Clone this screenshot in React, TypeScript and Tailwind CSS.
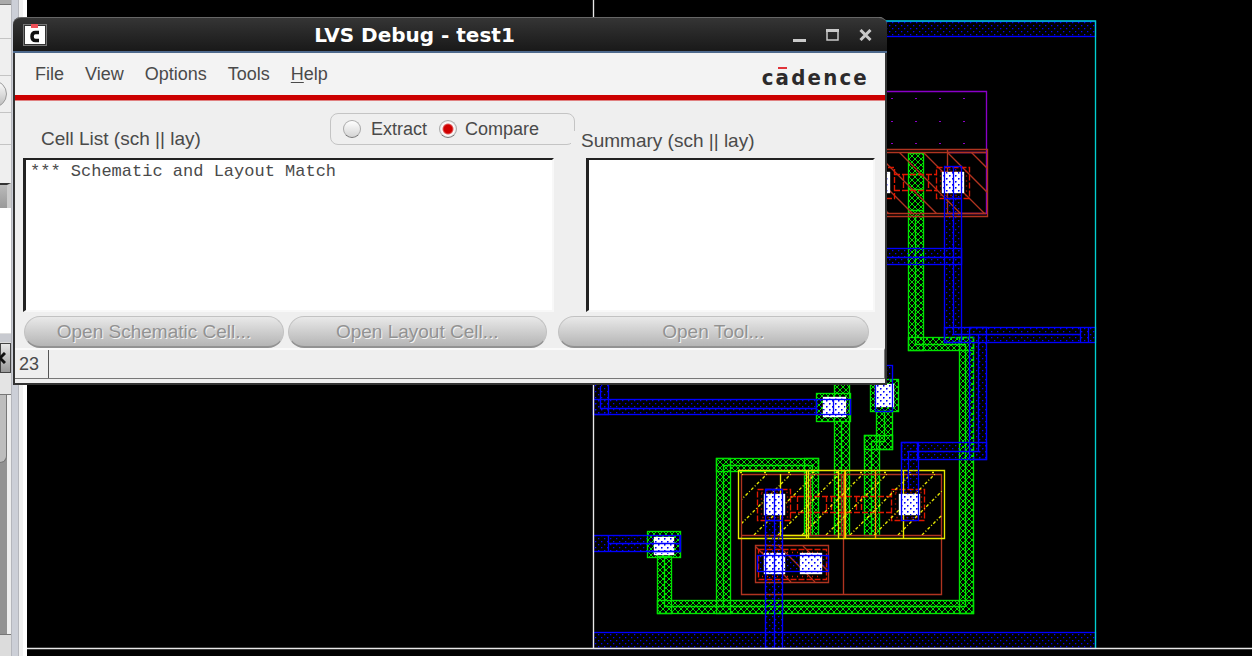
import React, { useState } from "react";

type Box = [number, number, number, number];

const greenBoxes: Box[] = [
  [908, 153, 15, 197],
  [908, 337, 65, 13],
  [959, 337, 14, 276],
  [657, 600, 316, 13],
  [657, 556, 14, 57],
  [716, 458, 14, 155],
  [716, 458, 102, 13],
  [804, 458, 14, 77],
  [834, 380, 15, 155],
  [876, 411, 16, 38],
  [864, 435, 28, 14],
  [864, 435, 15, 100],
  [647, 531, 33, 26],
  [816, 393, 34, 28],
  [870, 379, 28, 32],
];

const greenLines =
  "M915.5 215V344.5H965.5V606M664.5 557V606.5H965M723.5 606V465.5H812.5V535M841.5 421V535M884.5 411V441.5H871.5V535M908 174.5H923M908 189.5H923M908 210.5H923";

const blueBoxes: Box[] = [
  [880, 21, 215, 15],
  [593, 632, 502, 16],
  [593, 380, 15, 34],
  [593, 399, 257, 15],
  [593, 535, 87, 16],
  [880, 248, 81, 16],
  [944, 166, 17, 176],
  [944, 327, 151, 15],
  [969, 327, 17, 132],
  [901, 442, 85, 17],
  [901, 442, 17, 78],
  [765, 489, 17, 159],
  [757, 555, 71, 16],
  [875, 365, 17, 46],
];

const blueLines =
  "M600.5 386V408.5H816M816.5 399V415M608.5 535V551M608 543.5H680M886 257.5H961M953.5 166V334.5H1080.5M1080.5 327V342M1088.5 327V342M978.5 334V451.5H908.5V489M774.5 489V648M765 520.5H782M944 198.5H961M765 489.5H782M917.5 442V459M647.5 551.5H680V535M833.5 399V415";

const vias: Box[] = [
  [942, 172, 21, 20],
  [880, 172, 9, 20],
  [823, 397, 22, 19],
  [875, 384, 18, 22],
  [899, 494, 20, 20],
  [764, 494, 20, 20],
  [764, 553, 20, 20],
  [800, 553, 21, 20],
  [654, 537, 19, 17],
];

const purpleDots = [891, 915, 939, 963].flatMap((x) => [98, 121, 143].map((y) => [x, y]));

function Boxes({ boxes, fill, stroke }: { boxes: Box[]; fill: string; stroke: string }) {
  return (
    <g>
      {boxes.map(([x, y, w, h], i) => (
        <rect key={i} x={x + 0.5} y={y + 0.5} width={w} height={h} fill={fill} stroke={stroke} />
      ))}
    </g>
  );
}

function LayoutCanvas() {
  return (
    <svg
      className="block h-full w-full"
      viewBox="27 0 1225 656"
      preserveAspectRatio="xMinYMin slice"
      strokeWidth="1.35"
      fill="none"
      aria-label="Layout view"
    >
      <defs>
        <pattern id="metal" width="6" height="6" patternUnits="userSpaceOnUse">
          <path d="M1 1h1.300v1.300h-1.300zM4 4h1.300v1.300h-1.300z" fill="#0000ff" />
        </pattern>
        <pattern id="poly" width="6" height="6" patternUnits="userSpaceOnUse">
          <path
            d="M0 0h1v1h-1zM1 1h1v1h-1zM2 2h2v1h-2zM4 1h1v1h-1zM5 0h1v1h-1zM1 4h1v1h-1zM0 5h1v1h-1zM2 3h2v1h-2zM4 4h1v1h-1zM5 5h1v1h-1z"
            fill="#00dd00"
          />
        </pattern>
        <pattern id="via" width="6" height="6" patternUnits="userSpaceOnUse">
          <rect width="6" height="6" fill="#fff" />
          <path d="M1 1h1.400v1.400h-1.400zM4 4h1.400v1.400h-1.400z" fill="#0000ff" />
        </pattern>
        <clipPath id="nwell">
          <rect x="880" y="152" width="107" height="62" />
        </clipPath>
        <clipPath id="diff">
          <rect x="742" y="474" width="200" height="61" />
        </clipPath>
        <clipPath id="tap">
          <rect x="755" y="546" width="74" height="36" />
        </clipPath>
      </defs>

      <path d="M880 91.5H986.5V213.5H947M947 152.5H986" stroke="#8a00c8" />
      {purpleDots.map(([x, y]) => (
        <rect key={`${x}-${y}`} x={x} y={y} width="2" height="1" fill="#8a00c8" />
      ))}

      <Boxes boxes={greenBoxes} fill="url(#poly)" stroke="#00e400" />
      <path d={greenLines} stroke="#00e400" />

      <g stroke="#b03420">
        <path d="M880 149.5H987.5V216.5H880M880 152.5H986M880 213.5H986M947.5 149V214" />
        <path
          clipPath="url(#nwell)"
          d="M827 152l62 62M851 152l62 62M875 152l62 62M899 152l62 62M923 152l62 62M947 152l62 62M971 152l62 62"
        />
        <path d="M741.5 474.5H941.5V594.5H741.5ZM843.5 474V594M741 535.5H941M755.5 545.5H828.5V582.5H755.5ZM810.5 474V535M841.5 474V535" />
        <path clipPath="url(#tap)" d="M755 546l36 36M779 546l36 36M803 546l36 36" />
      </g>

      <g stroke="#e01800" strokeDasharray="6 2">
        <path d="M936.5 167.5H969.5V198.5H936.5ZM880 167.5H894.5V198.5H880M894 174.5H936M894 190.5H936M903.5 174V190M928.5 174V190" />
        <path d="M757.5 489.5H790.5V520.5H757.5ZM891.5 489.5H924.5V520.5H891.5ZM790 496.5H891M790 512.5H891M826.5 496V512M831.5 496V512M856.5 496V512M861.5 496V512M797.5 496V512M758.5 549.5H826.5V579.5H758.5Z" />
        <path
          d="M761.5 492.5H787.5V517.5H761.5ZM895.5 492.5H921.5V517.5H895.5ZM940.5 171.5H966.5V195.5H940.5ZM762 576.5H822M762 552.5H822"
          strokeDasharray="1 4"
        />
      </g>

      <g stroke="#eaea00">
        <path d="M738.5 470.5H944.5V538.5H738.5ZM780.5 474V535.5H808M806.5 471V538M808.5 471V538M838.5 471V538M845.5 471V538M903.5 471V538" />
        <path d="M875.5 471V538M844.5 471V538" stroke="#ff9800" />
        <path
          clipPath="url(#diff)"
          strokeDasharray="3 2 1 2"
          d="M706 535l62-62M730 535l62-62M754 535l62-62M778 535l62-62M802 535l62-62M826 535l62-62M850 535l62-62M874 535l62-62M898 535l62-62M922 535l62-62M682 535l62-62"
        />
        <path d="M740 472.5H944" strokeDasharray="2 22" />
      </g>

      <Boxes boxes={vias} fill="url(#via)" stroke="#fff" />
      <Boxes boxes={blueBoxes} fill="url(#metal)" stroke="#0000ff" />
      <path d={blueLines} stroke="#0000ff" />

      <path d="M880 21H1095.5V648" stroke="#00d0d0" />
      <path d="M593.5 0V648M27 648.5H1252" stroke="#e8e8e8" />
    </svg>
  );
}

function SidePanel() {
  return (
    <div className="flex h-full w-[27px] shrink-0 overflow-hidden">
      <div className="flex w-[11px] flex-col overflow-hidden bg-[#efefef]">
        <div className="h-[5px] border-b border-[#777] bg-[#aaa]" />
        <div className="h-[34px] border-b border-[#c4c4c4]" />
        <div className="h-[37px] border-b border-[#c4c4c4]" />
        <div className="flex h-[37px] items-center justify-end border-b border-[#c4c4c4] pr-1">
          <div className="size-7 shrink-0 rounded-full border border-[#999] bg-linear-to-b from-white to-[#bbb]" />
        </div>
        <div className="h-8 border-b border-[#c4c4c4]" />
        <div className="h-[38px]" />
        <div className="h-[25px] border-t-2 border-r-4 border-t-[#333] border-r-[#ccc] bg-linear-to-b from-[#bbb] to-[#999]" />
        <div className="h-[125px] bg-white" />
        <div className="h-[10px] border-y border-[#ddd] bg-[#c8cad0]" />
        <div className="flex h-[30px] items-center justify-end border border-[#444] bg-linear-to-b from-[#e8e8e8] to-[#999] pr-1">
          <svg className="h-3 w-3 shrink-0" viewBox="0 0 12 12" stroke="#111" strokeWidth="3">
            <path d="M1 1l10 10M11 1L1 11" />
          </svg>
        </div>
        <div className="h-[22px] border-b border-[#777] bg-[#e4e4e4]" />
        <div className="flex-1 border-r-4 border-[#eee] bg-[#929292]">
          <div className="h-[68px] rounded-br-lg border-r border-b border-[#777] bg-[#bdbdbd]" />
        </div>
        <div className="h-[22px] border-t border-[#777] bg-[#dcdcdc]" />
      </div>
      <div className="w-[8px] border-x border-[#b4b6bc] bg-[#cccfd7]" />
      <div className="w-[8px] border-l-4 border-[#f0f0f0] bg-white" />
    </div>
  );
}

function CadenceMark() {
  return (
    <svg className="h-[22px] w-6" viewBox="0 0 24 22" aria-hidden="true">
      <rect x="0.5" y="0.5" width="23" height="21" fill="#333" stroke="#777" />
      <rect x="2" y="2" width="20" height="18" fill="#fff" />
      <rect x="8" y="0" width="7" height="4" fill="#f0525a" />
      <path
        d="M16 8.500H12.500Q9 8.500 9 12.500T12.500 16.500H16"
        fill="none"
        stroke="#111"
        strokeWidth="3.500"
      />
    </svg>
  );
}

const toolButton =
  "h-8 min-w-0 rounded-full border border-[#c2c2c2] border-b-2 border-b-[#929292] bg-linear-to-b from-[#e9e9e9] to-[#b5b5b5] text-[19px] text-[#929292] [text-shadow:1px_1px_0_#f4f4f4]";
const listBox =
  "h-[154px] resize-none border-t-2 border-l-3 border-r-2 border-b-2 border-t-[#222] border-l-[#222] border-r-[#f8f8f8] border-b-[#f8f8f8] bg-white outline-none";
const radio =
  "size-[18px] appearance-none rounded-full border border-[#aaa] border-b-[#777] bg-linear-to-b from-white to-[#d4d4d4] checked:bg-[radial-gradient(circle_at_center,#d00000_0_4px,#e06060_5px,#ffffff_6px,#d8d8d8_9px)]";

function LvsDebugWindow() {
  const [mode, setMode] = useState("compare");
  return (
    <section className="absolute top-[17px] right-[365px] left-[13px] rounded-t-lg border-x-2 border-b-2 border-[#333] bg-[#efefef] font-['Liberation_Sans',Arial,sans-serif] text-[18px] leading-6 text-[#4a4a4a]">
      <header className="-mx-0.5 flex h-9 items-center rounded-t-lg border-t border-b-2 border-t-[#666] border-b-[#4d698c] bg-linear-to-b from-[#353535] to-[#191919] px-2.5">
        <CadenceMark />
        <h1 className="flex-1 pr-2.5 text-center font-['DejaVu_Sans',sans-serif] text-[20px] font-bold text-white">
          LVS Debug - test1
        </h1>
        <div className="flex items-center gap-[18px] pr-1">
          <button type="button" aria-label="Minimize" className="flex h-4 w-[15px] items-end justify-center">
            <svg width="13" height="14" viewBox="0 0 13 14">
              <path d="M0 11.500h13" stroke="#c9c9c9" strokeWidth="3" />
            </svg>
          </button>
          <button type="button" aria-label="Maximize" className="flex h-4 w-[15px] items-center justify-center">
            <svg width="13" height="12" viewBox="0 0 13 12" fill="none" stroke="#c9c9c9">
              <path d="M1 1V11H12V1" strokeWidth="1.500" />
              <path d="M0 1.500h13" strokeWidth="3" />
            </svg>
          </button>
          <button type="button" aria-label="Close" className="flex h-4 w-[15px] items-center justify-center">
            <svg width="13" height="12" viewBox="0 0 13 12" stroke="#c9c9c9" strokeWidth="3">
              <path d="M1.500 1l10 10M11.500 1l-10 10" />
            </svg>
          </button>
        </div>
      </header>

      <div className="flex h-[42px] items-center justify-between bg-[#f3f3f3] pr-4 pl-5">
        <nav className="flex gap-[21px]">
          <button type="button">File</button>
          <button type="button">View</button>
          <button type="button">Options</button>
          <button type="button">Tools</button>
          <button type="button">
            <span className="underline underline-offset-2">H</span>elp
          </button>
        </nav>
        <div className="pt-2 font-['DejaVu_Sans_Condensed','DejaVu_Sans',sans-serif] text-[22px] font-bold tracking-widest text-[#2c2a2b]">
          c
          <span className="relative">
            a<span className="absolute top-0.5 left-0.5 h-0.5 w-[9px] bg-[#e0333a]" />
          </span>
          dence
        </div>
      </div>
      <div className="h-1.5 border-b border-[#e08080] bg-[#cc0000]" />

      <div className="flex h-[57px] pt-3">
        <div className="flex w-0 flex-[560] justify-between">
          <label htmlFor="cells" className="ml-[26px] pt-3.5 text-[19px]">
            Cell List (sch || lay)
          </label>
          <fieldset className="flex h-8 w-[245px] items-center rounded-lg border border-[#c4c4c4] pl-3">
            <input
              id="extract"
              type="radio"
              name="mode"
              className={radio}
              checked={mode === "extract"}
              onChange={() => setMode("extract")}
            />
            <label htmlFor="extract" className="pr-3 pl-2.5">
              Extract
            </label>
            <input
              id="compare"
              type="radio"
              name="mode"
              className={radio}
              checked={mode === "compare"}
              onChange={() => setMode("compare")}
            />
            <label htmlFor="compare" className="pl-2">
              Compare
            </label>
          </fieldset>
        </div>
        <div className="z-10 w-0 flex-[310] pt-4">
          <label htmlFor="summary" className="-ml-1 inline-block bg-[#efefef] pl-2.5 text-[19px] leading-5">
            Summary (sch || lay)
          </label>
        </div>
      </div>

      <div className="flex gap-8 pr-2.5 pl-2">
        <textarea
          id="cells"
          readOnly
          className={`${listBox} w-0 flex-[530] px-1 font-['Liberation_Mono','Courier_New',monospace] text-[17px] leading-6`}
          value="*** Schematic and Layout Match"
        />
        <textarea id="summary" readOnly className={`${listBox} w-0 flex-[290]`} value="" />
      </div>

      <div className="flex pt-1 pr-4 pl-[9px]">
        <button type="button" disabled className={`${toolButton} mr-1 flex-[260]`}>
          Open Schematic Cell...
        </button>
        <button type="button" disabled className={`${toolButton} mr-[11px] flex-[259]`}>
          Open Layout Cell...
        </button>
        <button type="button" disabled className={`${toolButton} flex-[312]`}>
          Open Tool...
        </button>
      </div>

      <footer className="mb-1 flex h-[31px] items-stretch border-t-2 border-r border-b border-t-[#fafafa] border-r-[#777] border-b-[#777]">
        <span className="flex items-center border-r border-[#555] pr-[9px] pl-1">23</span>
      </footer>
    </section>
  );
}

export default function App() {
  return (
    <main className="relative flex h-screen overflow-hidden bg-black">
      <SidePanel />
      <div className="min-w-0 flex-1">
        <LayoutCanvas />
      </div>
      <LvsDebugWindow />
    </main>
  );
}
